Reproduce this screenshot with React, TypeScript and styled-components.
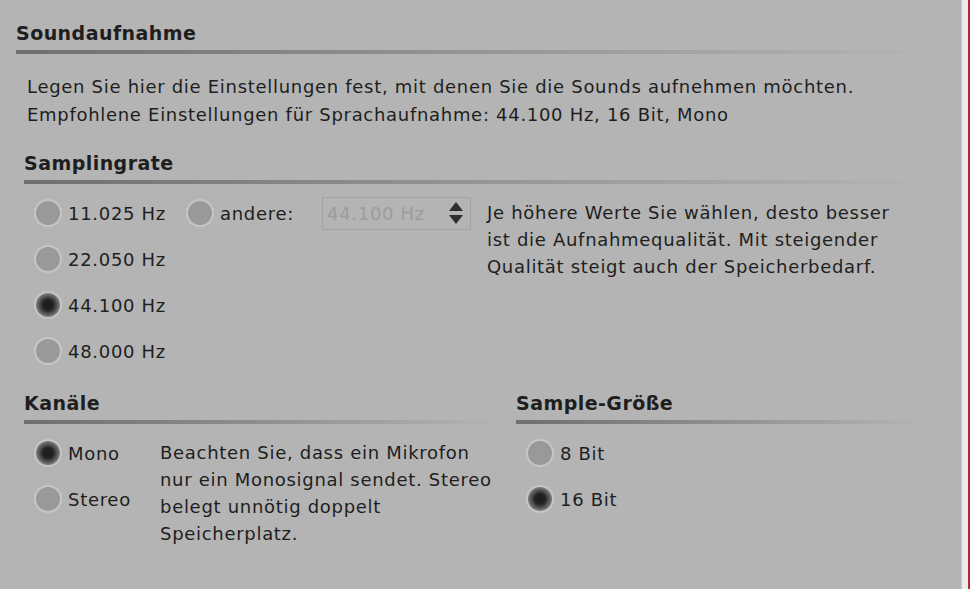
import React, { useState } from 'react';
import styled, { createGlobalStyle } from 'styled-components';

const GlobalStyle = createGlobalStyle`
  html, body {
    margin: 0;
    padding: 0;
    background: #b4b4b4;
    font-family: "DejaVu Sans", Verdana, sans-serif;
    color: #1e1e1e;
  }
`;

const sampleRates = ['11.025 Hz', '22.050 Hz', '44.100 Hz', '48.000 Hz'];

const App: React.FC = () => {
  const [rate, setRate] = useState('44.100 Hz');
  const [channels, setChannels] = useState('Mono');
  const [bits, setBits] = useState('16 Bit');

  return (
    <Page>
      <GlobalStyle />
      <Panel>
        <Title>Soundaufnahme</Title>
        <Rule />
        <Intro>
          Legen Sie hier die Einstellungen fest, mit denen Sie die Sounds aufnehmen möchten.
          <br />
          Empfohlene Einstellungen für Sprachaufnahme: 44.100 Hz, 16 Bit, Mono
        </Intro>

        <Section>
          <Title>Samplingrate</Title>
          <Rule />
          <OptionsRow>
            <RadioColumn $width={164}>
              {sampleRates.map(r => (
                <Option key={r} onClick={() => setRate(r)}>
                  <Radio $checked={rate === r} />
                  <span>{r}</span>
                </Option>
              ))}
            </RadioColumn>
            <OtherRow>
              <OtherOption onClick={() => setRate('andere')}>
                <Radio $checked={rate === 'andere'} />
                <span>andere:</span>
              </OtherOption>
              <SpinBox>
                <span>44.100 Hz</span>
                <svg width="16" height="26" viewBox="0 0 16 26">
                  <path d="M8 2 L15 11 L1 11 Z" fill="#2e2e2e" />
                  <path d="M1 15 L15 15 L8 24 Z" fill="#2e2e2e" />
                </svg>
              </SpinBox>
            </OtherRow>
            <Hint $width={425} $gap={16}>
              Je höhere Werte Sie wählen, desto besser ist die Aufnahmequalität. Mit steigender
              Qualität steigt auch der Speicherbedarf.
            </Hint>
          </OptionsRow>
        </Section>

        <Columns>
          <Section>
            <Title>Kanäle</Title>
            <Rule $fade />
            <OptionsRow>
              <RadioColumn $width={136}>
                {['Mono', 'Stereo'].map(c => (
                  <Option key={c} onClick={() => setChannels(c)}>
                    <Radio $checked={channels === c} />
                    <span>{c}</span>
                  </Option>
                ))}
              </RadioColumn>
              <Hint $width={338} $gap={0}>
                Beachten Sie, dass ein Mikrofon nur ein Monosignal sendet. Stereo belegt unnötig
                doppelt Speicherplatz.
              </Hint>
            </OptionsRow>
          </Section>
          <Section>
            <Title>Sample-Größe</Title>
            <Rule $fade />
            <OptionsRow>
              <RadioColumn>
                {['8 Bit', '16 Bit'].map(b => (
                  <Option key={b} onClick={() => setBits(b)}>
                    <Radio $checked={bits === b} />
                    <span>{b}</span>
                  </Option>
                ))}
              </RadioColumn>
            </OptionsRow>
          </Section>
        </Columns>
      </Panel>
      <Edge />
    </Page>
  );
};

const Page = styled.div`
  display: flex;
  width: 970px;
  height: 589px;
  overflow: hidden;
  font-size: 18px;
  letter-spacing: 0.7px;
`;

const Panel = styled.div`
  flex: 1;
  padding: 22px 32px 0 16px;
`;

const Edge = styled.div`
  width: 6px;
  background: #ececec;
  border-left: 1px solid #c4c4c4;
  border-right: 2px solid #b02a30;
`;

const Title = styled.div`
  font-weight: bold;
  font-size: 19px;
  letter-spacing: 0.45px;
  line-height: 22px;
  height: 22px;
  margin-bottom: 6px;
  white-space: nowrap;
`;

const Rule = styled.div<{ $fade?: boolean }>`
  height: 4px;
  background: ${p =>
    p.$fade
      ? 'linear-gradient(to right, #6f6f6f, #8c8c8c 45%, #b4b4b4 98%)'
      : 'linear-gradient(to right, #6f6f6f, #959595 50%, #b4b4b4 100%)'};
`;

const Intro = styled.div`
  padding-left: 11px;
  margin-top: 19px;
  line-height: 28px;
  white-space: nowrap;
`;

const Section = styled.div`
  padding-left: 8px;
  margin-top: 23px;
`;

const OptionsRow = styled.div`
  display: flex;
  align-items: flex-start;
  margin-top: 6px;
`;

const RadioColumn = styled.div<{ $width?: number }>`
  display: flex;
  flex-direction: column;
  box-sizing: border-box;
  width: ${p => (p.$width ? `${p.$width}px` : 'auto')};
  flex-shrink: 0;
  padding-left: 12px;
`;

const Option = styled.label`
  display: flex;
  align-items: center;
  gap: 8px;
  height: 46px;
  white-space: nowrap;
  cursor: pointer;
`;

const OtherOption = styled(Option)`
  width: 134px;
`;

const Radio = styled.span<{ $checked: boolean }>`
  width: 24px;
  height: 24px;
  border-radius: 50%;
  flex-shrink: 0;
  box-shadow: 0 0 0 2px #c6c6c6;
  background: ${p =>
    p.$checked
      ? 'radial-gradient(circle, #1c1c1c 0, #222 30%, #5a5a5a 55%, #979797 80%)'
      : '#999999'};
`;

const OtherRow = styled.div`
  display: flex;
  align-items: center;
  height: 46px;
  flex-shrink: 0;
`;

const SpinBox = styled.div`
  display: flex;
  align-items: center;
  justify-content: space-between;
  box-sizing: border-box;
  width: 149px;
  height: 33px;
  padding: 0 6px 0 4px;
  border: 1px solid #a2a2a2;
  color: #9c9c9c;
`;

const Hint = styled.div<{ $width: number; $gap: number }>`
  margin-left: ${p => p.$gap}px;
  margin-top: 9px;
  width: ${p => p.$width}px;
  line-height: 27px;
`;

const Columns = styled.div`
  display: grid;
  grid-template-columns: 492px 1fr;

  & > ${Section} {
    margin-top: 18px;
  }
`;

export default App;
